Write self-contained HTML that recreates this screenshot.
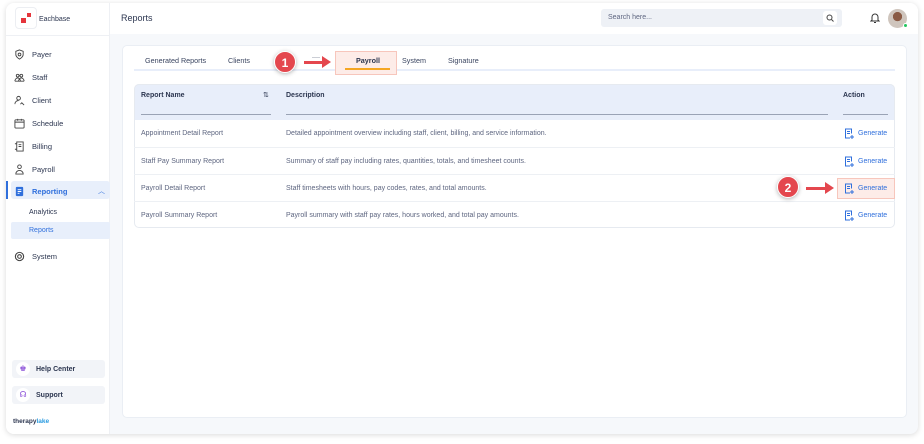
<!DOCTYPE html>
<html><head><meta charset="utf-8"><style>
*{box-sizing:border-box;margin:0;padding:0}
body{width:924px;height:444px;background:#fff;font-family:"Liberation Sans",sans-serif;position:relative;overflow:hidden;color:#1e2a44}
.frame{position:absolute;left:6px;top:3px;width:912px;height:431px;border-radius:8px;background:#f6f8fb;box-shadow:0 1px 6px rgba(0,0,0,.15);overflow:hidden}
.side{position:absolute;left:0;top:0;width:104px;height:431px;background:#fff;border-right:1px solid #eef0f4}
.head{position:absolute;left:104px;top:0;right:0;height:31px;background:#fff}
.abs{position:absolute}
.nav{position:absolute;left:8px;font-size:7.5px;color:#2c3650;display:flex;align-items:center;gap:7px}
.nav svg{width:11px;height:11px}
.card{position:absolute;left:116px;top:42px;width:785px;height:373px;background:#fff;border-radius:5px;border:1px solid #eaeef4}
.tab{position:absolute;top:56px;font-size:7.2px;color:#3a4560}
.row{position:absolute;left:134px;width:761px;height:27px;border-top:1px solid #edf0f4;font-size:7px;color:#5e6680}
.row span{position:absolute;top:10px}
.gen{position:absolute;left:710px;top:8px;color:#2f6fdc;font-size:7px;display:flex;align-items:center;gap:4px}
.gen svg{width:10px;height:11px}
.badge{position:absolute;width:22px;height:22px;border-radius:50%;background:#e4474e;color:#fff;font-weight:bold;font-size:12px;text-align:center;line-height:22px;border:1.5px solid #fff;box-shadow:0 1px 4px rgba(0,0,0,.3)}
</style></head><body>
<div class="frame">
<div class="side">
 <div class="abs" style="left:9px;top:4px;width:22px;height:22px;border:1px solid #eceef2;border-radius:4px">
  <div class="abs" style="left:5px;top:10px;width:5px;height:5px;background:#e5353c"></div>
  <div class="abs" style="left:11px;top:5px;width:4px;height:4px;background:#e5353c"></div></div>
 <div class="abs" style="left:33px;top:13px;font-size:7px;color:#2c3650">Eachbase</div>
 <div class="abs" style="left:0;top:32px;width:104px;height:1px;background:#eef0f4"></div>
 <div class="nav" style="top:46px"><svg viewBox="0 0 12 12" fill="none" stroke="#444" stroke-width="1"><path d="M6 1l4 1.5v3.5c0 3-4 5-4 5s-4-2-4-5V2.5z"/><circle cx="6" cy="6" r="1.5"/></svg>Payer</div>
 <div class="nav" style="top:69px"><svg viewBox="0 0 12 12" fill="none" stroke="#444" stroke-width="1"><circle cx="4" cy="4" r="1.5"/><circle cx="8" cy="4" r="1.5"/><path d="M1 10c0-2 1.5-3.5 3-3.5s3 1.5 3 3.5M5 10c0-2 1.5-3.5 3-3.5s3 1.5 3 3.5M1 10h10"/></svg>Staff</div>
 <div class="nav" style="top:92px"><svg viewBox="0 0 12 12" fill="none" stroke="#444" stroke-width="1"><circle cx="5" cy="3.5" r="2"/><path d="M1 10c0-2.5 2-4 4-4M7 10l1.5-1.5L11 11"/></svg>Client</div>
 <div class="nav" style="top:115px"><svg viewBox="0 0 12 12" fill="none" stroke="#444" stroke-width="1"><rect x="1" y="2" width="10" height="9" rx="1"/><path d="M1 4.5h10M4 1v2M8 1v2"/></svg>Schedule</div>
 <div class="nav" style="top:138px"><svg viewBox="0 0 12 12" fill="none" stroke="#444" stroke-width="1"><path d="M3 1h7v10H3zM1 3h2M1 9h2M5 4h3M5 6h3"/></svg>Billing</div>
 <div class="nav" style="top:161px"><svg viewBox="0 0 12 12" fill="none" stroke="#444" stroke-width="1"><circle cx="6" cy="3" r="2"/><path d="M2 11c0-2.5 2-4 4-4s4 1.5 4 4z"/></svg>Payroll</div>
 <div class="abs" style="left:0;top:178px;width:2px;height:18px;background:#2f6fdc"></div>
 <div class="abs" style="left:5px;top:178px;width:99px;height:18px;background:#e8effb;border-radius:3px"></div>
 <div class="nav" style="top:183px;color:#2f6fdc;font-weight:bold"><svg viewBox="0 0 12 12"><rect x="2" y="1" width="8" height="10" rx="1" fill="#2f6fdc"/><path d="M4 4h4M4 6h4M4 8h2" stroke="#fff"/></svg>Reporting</div>
 <div class="abs" style="left:92px;top:183px;font-size:7px;color:#2f6fdc">︿</div>
 <div class="abs" style="left:23px;top:206px;font-size:7px;color:#2c3650">Analytics</div>
 <div class="abs" style="left:5px;top:219px;width:99px;height:17px;background:#e8effb;border-radius:2px"></div>
 <div class="abs" style="left:23px;top:224px;font-size:7px;color:#2f6fdc">Reports</div>
 <div class="nav" style="top:248px"><svg viewBox="0 0 12 12" fill="none" stroke="#444" stroke-width="1.2"><circle cx="6" cy="6" r="4.5"/><circle cx="6" cy="6" r="2"/></svg>System</div>
 <div class="abs" style="left:6px;top:357px;width:93px;height:18px;background:#f2f4f8;border-radius:3px"></div>
 <div class="abs" style="left:10px;top:359px;width:14px;height:14px;background:#fff;border-radius:50%;color:#8a4fd8;font-size:8px;text-align:center;line-height:14px">♚</div>
 <div class="abs" style="left:30px;top:363px;font-size:7px;font-weight:bold;color:#2c3650">Help Center</div>
 <div class="abs" style="left:6px;top:383px;width:93px;height:18px;background:#f2f4f8;border-radius:3px"></div>
 <div class="abs" style="left:10px;top:385px;width:14px;height:14px;background:#fff;border-radius:50%;color:#8a4fd8;font-size:8px;text-align:center;line-height:14px">☊</div>
 <div class="abs" style="left:30px;top:389px;font-size:7px;font-weight:bold;color:#2c3650">Support</div>
 <div class="abs" style="left:7px;top:415px;font-size:6.5px;font-weight:bold;color:#2c3650">therapy<span style="color:#2a9be0">lake</span></div>
</div>
<div class="head">
 <div class="abs" style="left:11px;top:10px;font-size:9px;color:#2c3650">Reports</div>
 <div class="abs" style="left:491px;top:6px;width:241px;height:18px;background:#eef1f6;border-radius:3px"></div>
 <div class="abs" style="left:498px;top:11px;font-size:7px;color:#5e6680">Search here...</div>
 <div class="abs" style="left:713px;top:8px;width:14px;height:14px;background:#fff;border-radius:3px"></div>
 <svg class="abs" style="left:716px;top:11px" width="8" height="8" viewBox="0 0 8 8" fill="none" stroke="#444"><circle cx="3.5" cy="3.5" r="2.5"/><path d="M5.5 5.5L7.5 7.5"/></svg>
 <svg class="abs" style="left:760px;top:9px" width="10" height="12" viewBox="0 0 10 12" fill="none" stroke="#333"><path d="M2 8V5a3 3 0 016 0v3l1 1H1zM4 10.5h2"/></svg>
 <div class="abs" style="left:778px;top:6px;width:19px;height:19px;border-radius:50%;background:radial-gradient(circle at 50% 40%,#8a5a44 30%,#cfc5bd 32%)"></div>
 <div class="abs" style="left:793px;top:20px;width:5px;height:5px;border-radius:50%;background:#22c55e;border:1px solid #fff"></div>
</div>
</div>
<div class="card" style="left:122px;top:45px"></div>
<div class="abs" style="left:134px;top:69px;width:761px;height:2px;background:#e8eefa"></div>
<div class="tab" style="left:145px">Generated Reports</div>
<div class="tab" style="left:228px">Clients</div>
<div class="tab" style="left:312px;top:51px">....</div>
<div class="abs" style="left:335px;top:51px;width:62px;height:24px;background:#fdece8;border:1px solid #f7c6bc"></div>
<div class="tab" style="left:356px;font-weight:bold;color:#2c3650">Payroll</div>
<div class="abs" style="left:345px;top:68px;width:45px;height:2px;background:#f5a623"></div>
<div class="tab" style="left:402px">System</div>
<div class="tab" style="left:448px">Signature</div>
<div class="badge" style="left:274px;top:51px">1</div>
<div class="abs" style="left:304px;top:61px;width:20px;height:3px;background:#e4474e"></div>
<div class="abs" style="left:322px;top:56px;width:0;height:0;border-left:9px solid #e4474e;border-top:6px solid transparent;border-bottom:6px solid transparent"></div>
<div class="abs" style="left:134px;top:84px;width:761px;height:36px;background:#e8eefa;border-radius:5px 5px 0 0"></div>
<div class="abs" style="left:134px;top:84px;width:761px;height:144px;border:1px solid #e6eaf0;border-radius:5px"></div>
<div class="abs" style="left:141px;top:92px;font-size:7px;font-weight:bold;color:#2c3650">Report Name</div>
<div class="abs" style="left:263px;top:91px;font-size:7px;color:#2c3650">⇅</div>
<div class="abs" style="left:286px;top:92px;font-size:7px;font-weight:bold;color:#2c3650">Description</div>
<div class="abs" style="left:843px;top:92px;font-size:7px;font-weight:bold;color:#2c3650">Action</div>
<div class="abs" style="left:141px;top:114px;width:130px;height:1px;background:#9aa3b5"></div>
<div class="abs" style="left:286px;top:114px;width:542px;height:1px;background:#9aa3b5"></div>
<div class="abs" style="left:843px;top:114px;width:45px;height:1px;background:#9aa3b5"></div>
<div class="row" style="top:120px;border-top:none"><span style="left:7px">Appointment Detail Report</span><span style="left:152px">Detailed appointment overview including staff, client, billing, and service information.</span><div class="gen"><svg viewBox="0 0 10 11" fill="none" stroke="#2f6fdc"><path d="M6 10H1.5V1h6v4.5M3 3.5h3M3 5.5h3M8 7v4M6 9h4"/></svg>Generate</div></div>
<div class="row" style="top:147px"><span style="left:7px">Staff Pay Summary Report</span><span style="left:152px">Summary of staff pay including rates, quantities, totals, and timesheet counts.</span><div class="gen"><svg viewBox="0 0 10 11" fill="none" stroke="#2f6fdc"><path d="M6 10H1.5V1h6v4.5M3 3.5h3M3 5.5h3M8 7v4M6 9h4"/></svg>Generate</div></div>
<div class="row" style="top:174px"><span style="left:7px">Payroll Detail Report</span><span style="left:152px">Staff timesheets with hours, pay codes, rates, and total amounts.</span><div class="abs" style="left:703px;top:3px;width:58px;height:21px;background:#fdece8;border:1px solid #f7c6bc"></div><div class="gen"><svg viewBox="0 0 10 11" fill="none" stroke="#2f6fdc"><path d="M6 10H1.5V1h6v4.5M3 3.5h3M3 5.5h3M8 7v4M6 9h4"/></svg>Generate</div></div>
<div class="row" style="top:201px"><span style="left:7px">Payroll Summary Report</span><span style="left:152px">Payroll summary with staff pay rates, hours worked, and total pay amounts.</span><div class="gen"><svg viewBox="0 0 10 11" fill="none" stroke="#2f6fdc"><path d="M6 10H1.5V1h6v4.5M3 3.5h3M3 5.5h3M8 7v4M6 9h4"/></svg>Generate</div></div>
<div class="badge" style="left:777px;top:176px">2</div>
<div class="abs" style="left:806px;top:187px;width:20px;height:3px;background:#e4474e"></div>
<div class="abs" style="left:825px;top:182px;width:0;height:0;border-left:9px solid #e4474e;border-top:6px solid transparent;border-bottom:6px solid transparent"></div>
</body></html>
